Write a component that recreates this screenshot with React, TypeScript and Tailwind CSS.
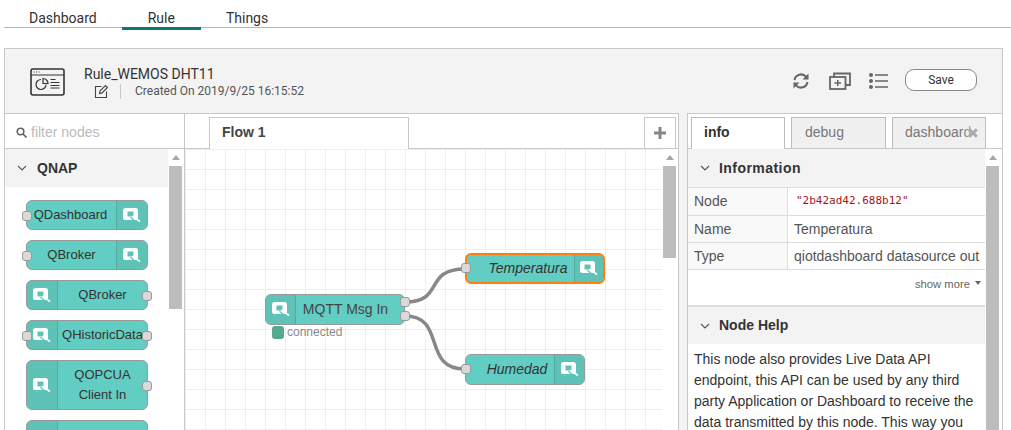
import type { ReactNode } from "react";

const SANS = "font-['Liberation_Sans',Arial,sans-serif]";

function QIcon() {
  return (
    <svg width="18" height="15" viewBox="0 0 18 15">
      <path fill="#fff" fillRule="evenodd" d="M2.500 0h10A2.500 2.500 0 0 1 15 2.500v7a2.500 2.500 0 0 1-2.500 2.500h-10A2.500 2.500 0 0 1 0 9.500v-7A2.500 2.500 0 0 1 2.500 0zM4.500 3.500v5h6v-5z" />
      <path d="M7.500 9.200l3.800 3.300" stroke="#5ec2b7" strokeWidth="1.200" />
      <path d="M9.500 8l7.500 5.500" stroke="#fff" strokeWidth="1.600" />
    </svg>
  );
}

function Port({ className }: { className: string }) {
  return <span className={`absolute w-[10px] h-[10px] rounded-[3px] bg-[#d9d9d9] border border-[#999] ${className}`} />;
}

function PaletteNode({ label, side, tall, left, right }: { label: ReactNode; side: "l" | "r"; tall?: boolean; left?: boolean; right?: boolean }) {
  const icon = (
    <span className={`w-[31px] shrink-0 flex items-center justify-center bg-[#5ec2b7] border-[#55aaa0] ${side === "l" ? "border-r rounded-l-[5px]" : "border-l rounded-r-[5px]"}`}>
      <QIcon />
    </span>
  );
  return (
    <div className={`relative w-[122px] ${tall ? "h-[50px]" : "h-[30px]"} flex rounded-[6px] border border-[#999] bg-[#62cdc2] text-[13px] leading-[20px] text-[#333]`}>
      {side === "l" && icon}
      <span className="flex-1 min-w-0 flex items-center justify-center text-center whitespace-nowrap">{label}</span>
      {side === "r" && icon}
      {left && <Port className="left-[-5px] top-[10px]" />}
      {right && <Port className={`right-[-5px] ${tall ? "top-[20px]" : "top-[10px]"}`} />}
    </div>
  );
}

function Scrollbar({ thumb }: { thumb: string }) {
  return (
    <div className="w-[16px] shrink-0 flex flex-col bg-white pl-[1px]">
      <span className="h-[17px] w-[13px] flex items-center justify-center">
        <span className="w-0 h-0 border-x-[4px] border-x-transparent border-b-[5px] border-b-[#a6a6a6]" />
      </span>
      <span className={`w-[13px] bg-[#bdbdbd] ${thumb}`} />
    </div>
  );
}

function SectionHead({ title, className }: { title: ReactNode; className: string }) {
  return (
    <div className={`flex items-center bg-[#f3f3f3] font-bold text-[14px] text-[#333] ${className}`}>
      <svg width="10" height="6" viewBox="0 0 10 6" className="ml-[12px] mr-[9px]">
        <path d="M1 1l4 4 4-4" fill="none" stroke="#555" strokeWidth="1.1" />
      </svg>
      {title}
    </div>
  );
}

function InfoRow({ name, h, children }: { name: string; h: string; children: ReactNode }) {
  return (
    <div className={`${h} flex border-b border-[#ddd] text-[14px] text-[#555]`}>
      <span className="w-[100px] pl-[6px] bg-[#f9f9f9] border-r border-[#ddd] flex items-center">{name}</span>
      <span className="flex-1 pl-[6px] flex items-center whitespace-nowrap">{children}</span>
    </div>
  );
}

function CanvasNode({ label, y, w, pad, selected }: { label: string; y: string; w: string; pad: string; selected?: boolean }) {
  return (
    <div className={`absolute left-[280px] ${y} ${w} h-[31px] flex rounded-[6px] bg-[#62cdc2] text-[14px] italic text-[#333] ${selected ? "border-2 border-[#ff7f0e]" : "border border-[#999]"}`}>
      <span className={`flex-1 flex items-center justify-center ${pad}`}>{label}</span>
      <span className={`${selected ? "w-[29px]" : "w-[30px]"} flex items-center justify-center bg-[#5ec2b7] border-l border-[#55aaa0] rounded-r-[5px]`}>
        <QIcon />
      </span>
      <Port className={selected ? "left-[-6px] top-[8px]" : "left-[-5px] top-[9px]"} />
    </div>
  );
}

export default function App() {
  return (
    <div className="w-[1011px] h-[430px] overflow-hidden bg-white font-['Roboto',sans-serif] text-[#333]">
      {/* Top tabs */}
      <div className="ml-[4px] h-[28px] flex border-b border-[#b5b5b5] text-[14px] leading-[36px]">
        <span className="px-[25px] h-[28px]">Dashboard</span>
        <span className="px-[26px] h-[30px] border-b-[3px] border-[#0b7a75]">Rule</span>
        <span className="px-[25px] h-[28px]">Things</span>
      </div>

      <div className="ml-[4px] mt-[20px] w-[999px] h-[400px] flex flex-col border border-[#c8c8c8] bg-[#f3f3f3]">
        {/* Header */}
        <div className="h-[64px] shrink-0 flex items-center pl-[25px] pr-[25px]">
          <svg width="35" height="28" viewBox="0 0 35 28" fill="none" stroke="#333" strokeWidth="1.600" className="mt-[2px]">
            <rect x="1" y="1" width="33" height="26" rx="2" />
            <path d="M1 7h33" strokeWidth="1.200" />
            <path d="M3.500 4h1M6 4h1M8.500 4h1" strokeWidth="1.200" />
            <path d="M11 11.500a5 5 0 1 0 5 5" strokeWidth="1.200" />
            <path d="M13 10.500a5 5 0 0 1 5 5h-5z" strokeWidth="1.200" />
            <path d="M20.500 11.500h5M20.500 14.500h9M20.500 17.500h9M20.500 20h9" strokeWidth="1" />
          </svg>
          <div className="ml-[19px] mt-[2px]">
            <div className="text-[14px] leading-[16px] mt-[2px]">Rule_WEMOS DHT11</div>
            <div className="flex items-center text-[12px] text-[#555]">
              <svg width="15" height="15" viewBox="0 0 15 15" fill="none" stroke="#444" strokeWidth="1.100" className="ml-[10px]">
                <path d="M7.500 2.500H1.500v11h11V7.500" />
                <path d="M5.500 9.500l.6-2.600 5.400-5.400 2 2-5.400 5.400z" />
              </svg>
              <span className="w-px h-[15px] bg-[#c8c8c8] ml-[11px] mr-[14px]" />
              Created On 2019/9/25 16:15:52
            </div>
          </div>
          <div className="ml-auto flex items-center">
            <svg width="18" height="18" viewBox="0 0 18 18" fill="none" stroke="#666" strokeWidth="2" className="mr-[1px]">
              <path d="M2.500 8a6.600 6.600 0 0 1 11.500-3.300L15.500 6.500" />
              <path d="M15.500 10a6.600 6.600 0 0 1-11.500 3.300L2.500 11.500" />
              <path d="M16.500 1.500v6h-6z" fill="#666" stroke="none" />
              <path d="M1.500 16.500v-6h6z" fill="#666" stroke="none" />
            </svg>
            <svg width="22" height="18" viewBox="0 0 22 18" fill="none" stroke="#666" strokeWidth="1.800" className="ml-[18px]">
              <rect x="1" y="5" width="15.500" height="12" />
              <path d="M5 5V1.500h16V13h-4.500" />
              <path d="M5.500 11h6.500M8.750 8v6" strokeWidth="1.500" />
            </svg>
            <svg width="19" height="16" viewBox="0 0 19 16" className="ml-[18px]">
              <circle cx="2" cy="2" r="2" fill="#666" />
              <circle cx="2" cy="8" r="2" fill="#666" />
              <circle cx="2" cy="14" r="2" fill="#666" />
              <path d="M6 2h13M6 8h13M6 14h13" stroke="#666" strokeWidth="1.500" />
            </svg>
            <button className="ml-[17px] mb-[2px] w-[72px] h-[22px] rounded-[9px] border border-[#888] bg-white text-[12px] leading-[20px] text-[#333]">Save</button>
          </div>
        </div>

        {/* Body */}
        <div className={`flex-1 flex min-h-0 ${SANS}`}>
          {/* Palette */}
          <div className="w-[180px] shrink-0 flex flex-col border-t border-r border-[#c8c8c8] bg-white">
            <div className="h-[35px] shrink-0 flex items-center border-b border-[#c8c8c8] pl-[11px] pt-[2px] text-[14px] text-[#bbb]">
              <svg width="11" height="11" viewBox="0 0 11 11" fill="none" stroke="#666" strokeWidth="1.600" className="mr-[4px]">
                <circle cx="4.500" cy="4.500" r="3.300" />
                <path d="M7 7l3.500 3.500" />
              </svg>
              filter nodes
            </div>
            <div className="flex-1 flex min-h-0">
              <div className="flex-1 min-w-0">
                <SectionHead title={<span className="ml-[1px]">QNAP</span>} className="h-[38px]" />
                <div className="pl-[21px] pt-[13px] flex flex-col gap-[10px]">
                  <PaletteNode label={<span className="mr-[2px]">QDashboard</span>} side="r" left />
                  <PaletteNode label="QBroker" side="r" left />
                  <PaletteNode label="QBroker" side="l" right />
                  <PaletteNode label="QHistoricData" side="l" left right />
                  <PaletteNode label={<>QOPCUA<br />Client In</>} side="l" tall right />
                  <PaletteNode label={<>QOPCUA<br />Client Out</>} side="l" tall right />
                </div>
              </div>
              <Scrollbar thumb="h-[143px]" />
            </div>
          </div>

          {/* Workspace */}
          <div className="w-[494px] shrink-0 flex flex-col border-t border-r border-[#c8c8c8] bg-white">
            <div className="h-[35px] shrink-0 relative flex items-end border-b border-[#c8c8c8] pl-[24px]">
              <div className="w-[200px] h-[32px] mb-[-1px] bg-white border border-b-0 border-[#c8c8c8] pl-[12px] font-bold text-[14px] leading-[28px] text-[#444]">Flow 1</div>
              <div className="absolute right-[2px] bottom-0 w-[32px] h-[31px] border-x border-t border-[#c8c8c8] flex items-center justify-center">
                <svg width="12" height="12" viewBox="0 0 12 12"><path d="M6 0v12M0 6h12" stroke="#888" strokeWidth="3" /></svg>
              </div>
            </div>
            <div className="flex-1 flex min-h-0">
              <div className="relative flex-1 min-w-0 overflow-hidden bg-[linear-gradient(to_right,#eee_1px,transparent_1px),linear-gradient(to_bottom,#eee_1px,transparent_1px)] bg-[size:20px_20px]">
                <svg className="absolute left-0 top-0" width="480" height="280" fill="none" stroke="#888" strokeWidth="3.500">
                  <path d="M220 153C260 153 238 120 280 120" />
                  <path d="M220 167C262 167 236 220 280 220" />
                </svg>
                <CanvasNode label="Temperatura" y="top-[104px]" w="w-[140px]" pad="pl-[15px]" selected />
                <CanvasNode label="Humedad" y="top-[205px]" w="w-[120px]" pad="pl-[14px]" />
                <div className="absolute left-[80px] top-[145px] w-[140px] h-[31px] flex rounded-[6px] border border-[#999] bg-[#62cdc2] text-[14px] text-[#444]">
                  <span className="w-[30px] flex items-center justify-center bg-[#5ec2b7] border-r border-[#55aaa0] rounded-l-[5px]">
                    <QIcon />
                  </span>
                  <span className="flex-1 flex items-center justify-center pr-[9px]">MQTT Msg In</span>
                  <Port className="right-[-6px] top-[2px]" />
                  <Port className="right-[-6px] top-[16px]" />
                </div>
                <div className="absolute left-[87px] top-[174px] flex items-center text-[12px] text-[#888]">
                  <span className="w-[12px] h-[13px] rounded-[3px] bg-[#55a98c] mr-[3px]" />
                  connected
                </div>
              </div>
              <Scrollbar thumb="h-[92px]" />
            </div>
          </div>

          <div className="w-[8px] shrink-0" />

          {/* Sidebar */}
          <div className="flex-1 min-w-0 flex flex-col border-t border-l border-[#c8c8c8] bg-white">
            <div className="h-[35px] shrink-0 relative flex items-end gap-[6px] border-b border-[#c8c8c8] pl-[3px] text-[14px]">
              <div className="w-[94px] h-[32px] mb-[-1px] bg-white border border-b-0 border-[#bbb] pl-[12px] font-bold leading-[28px] text-[#333]">info</div>
              <div className="w-[95px] h-[31px] bg-[#f0f0f0] border border-b-0 border-[#bbb] pl-[13px] leading-[28px] text-[#777]">debug</div>
              <div className="relative w-[94px] h-[31px] bg-[#f0f0f0] border border-b-0 border-[#bbb] pl-[12px] leading-[28px] text-[#777] overflow-hidden whitespace-nowrap">
                dashboard
                <span className="absolute right-[1px] top-0 h-full w-[22px] flex items-center justify-center bg-gradient-to-r from-transparent to-[#f0f0f0]">
                  <svg width="10" height="10" viewBox="0 0 10 10"><path d="M1.200 1.200l7.600 7.600M8.800 1.200L1.200 8.800" stroke="#aaa" strokeWidth="2.800" /></svg>
                </span>
              </div>
            </div>
            <div className="flex-1 flex min-h-0 pr-[1px]">
              <div className="flex-1 min-w-0">
                <SectionHead title={<span className="tracking-[0.45px]">Information</span>} className="h-[39px] border-b border-[#ddd]" />
                <InfoRow name="Node" h="h-[28px]"><span className="font-['DejaVu_Sans_Mono',monospace] text-[11px] text-[#a31515] ml-[2px]">"2b42ad42.688b12"</span></InfoRow>
                <InfoRow name="Name" h="h-[27px]">Temperatura</InfoRow>
                <InfoRow name="Type" h="h-[27px]">qiotdashboard datasource out</InfoRow>
                <div className="h-[35px] flex items-start justify-end pr-[4px] pt-[6px] text-[11.250px] text-[#666]">
                  show more
                  <span className="ml-[5px] mt-[5px] w-0 h-0 border-x-[3.500px] border-x-transparent border-t-[4px] border-t-[#666]" />
                </div>
                <SectionHead title="Node Help" className="h-[39px] border-t-2 border-[#ddd]" />
                <p className="px-[6px] pt-[5px] text-[14px] leading-[21px] text-[#333]">
                  This node also provides Live Data API endpoint, this API can be used by any third party Application or Dashboard to receive the data transmitted by this node. This way you
                </p>
              </div>
              <Scrollbar thumb="flex-1" />
            </div>
          </div>
        </div>
      </div>
    </div>
  );
}
